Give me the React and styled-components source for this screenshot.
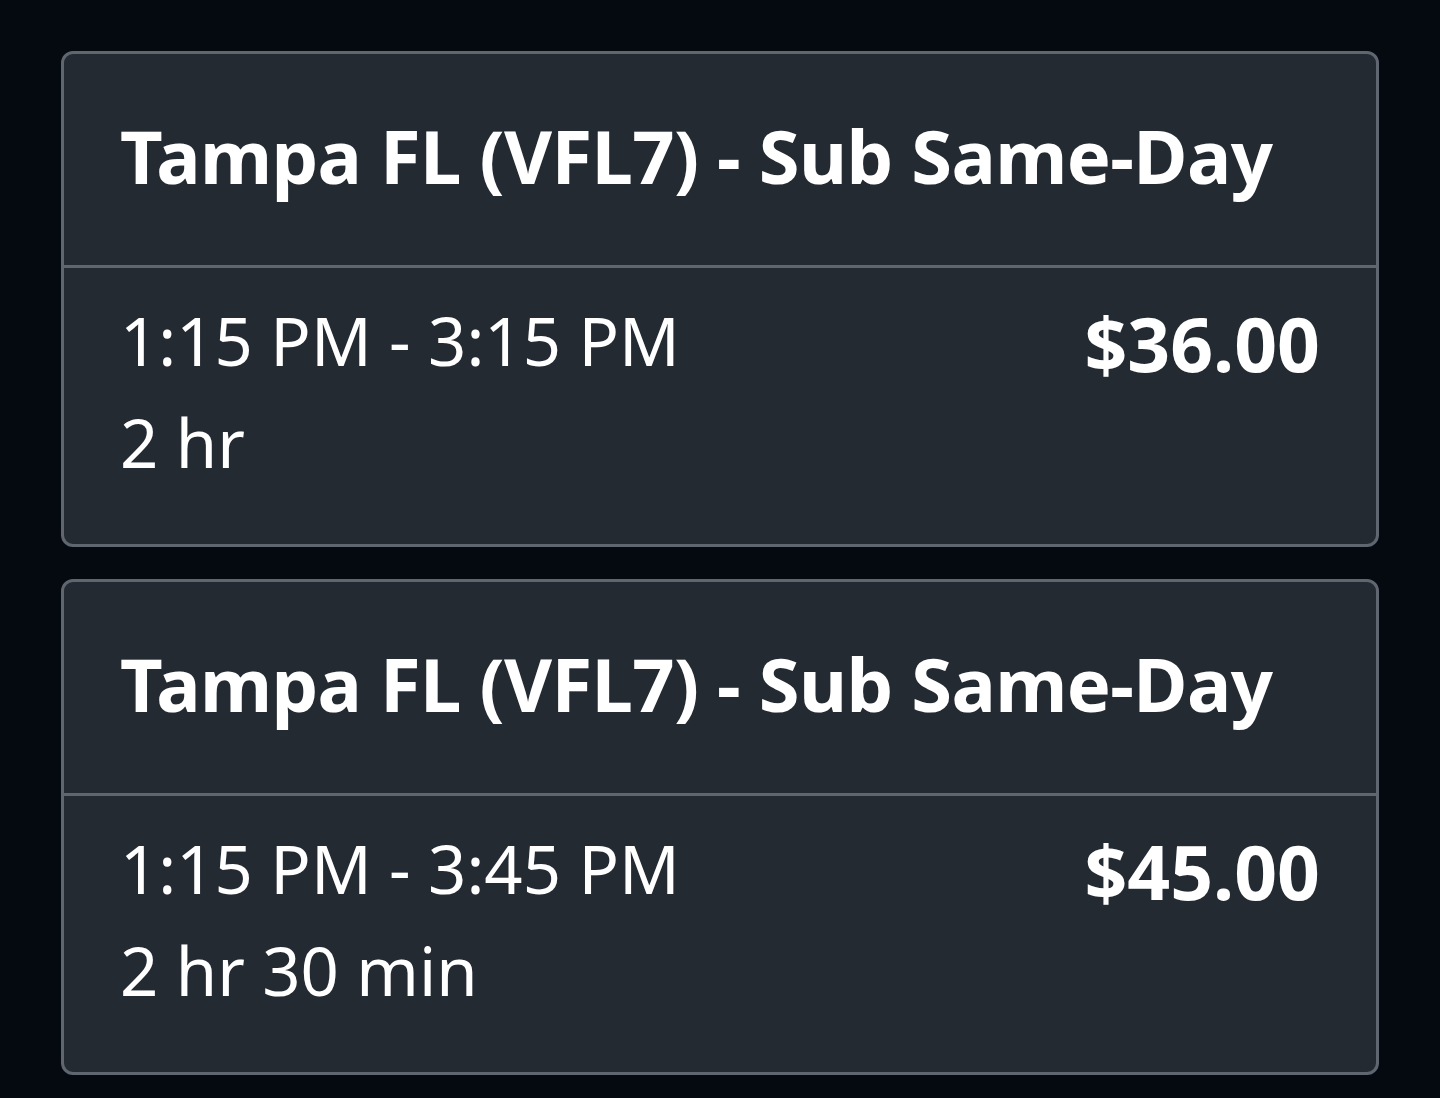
import React from "react";
import styled, { createGlobalStyle } from "styled-components";

const GlobalStyle = createGlobalStyle`
  html, body {
    margin: 0;
    padding: 0;
    background-color: #050910;
  }
  body {
    font-family: "Noto Sans", "Open Sans", sans-serif;
  }
`;

const Page = styled.div`
  display: flex;
  flex-direction: column;
  gap: 32px;
  padding: 51px 61px 23px 61px;
  min-height: 1098px;
  box-sizing: border-box;
`;

const Card = styled.div`
  background-color: #232a32;
  border: 3px solid #5f6670;
  border-radius: 12px;
  color: #ffffff;
  height: 496px;
  box-sizing: border-box;
  display: flex;
  flex-direction: column;
`;

const Header = styled.div`
  height: 214px;
  box-sizing: border-box;
  display: flex;
  align-items: center;
  padding: 0 56px 8px 56px;
  border-bottom: 3px solid #5f6670;
`;

const Title = styled.h2`
  margin: 0;
  font-size: 74px;
  font-weight: 700;
  letter-spacing: -0.6px;
  white-space: nowrap;
`;

const Body = styled.div`
  flex: 1;
  display: flex;
  justify-content: space-between;
  align-items: flex-start;
  padding: 21px 56px 0 56px;
`;

const Times = styled.div`
  display: flex;
  flex-direction: column;
`;

const Line = styled.div`
  font-size: 67px;
  font-weight: 400;
  line-height: 102px;
`;

const Price = styled.div`
  font-size: 75px;
  font-weight: 700;
  line-height: 102px;
  margin-top: 3px;
`;

const shifts = [
  { id: 1, time: "1:15 PM - 3:15 PM", duration: "2 hr", price: "$36.00" },
  { id: 2, time: "1:15 PM - 3:45 PM", duration: "2 hr 30 min", price: "$45.00" },
];

const App = () => {
  return (
    <>
      <GlobalStyle />
      <Page>
        {shifts.map((shift) => (
          <Card key={shift.id}>
            <Header>
              <Title>Tampa FL (VFL7) - Sub Same-Day</Title>
            </Header>
            <Body>
              <Times>
                <Line>{shift.time}</Line>
                <Line>{shift.duration}</Line>
              </Times>
              <Price>{shift.price}</Price>
            </Body>
          </Card>
        ))}
      </Page>
    </>
  );
};

export default App;
